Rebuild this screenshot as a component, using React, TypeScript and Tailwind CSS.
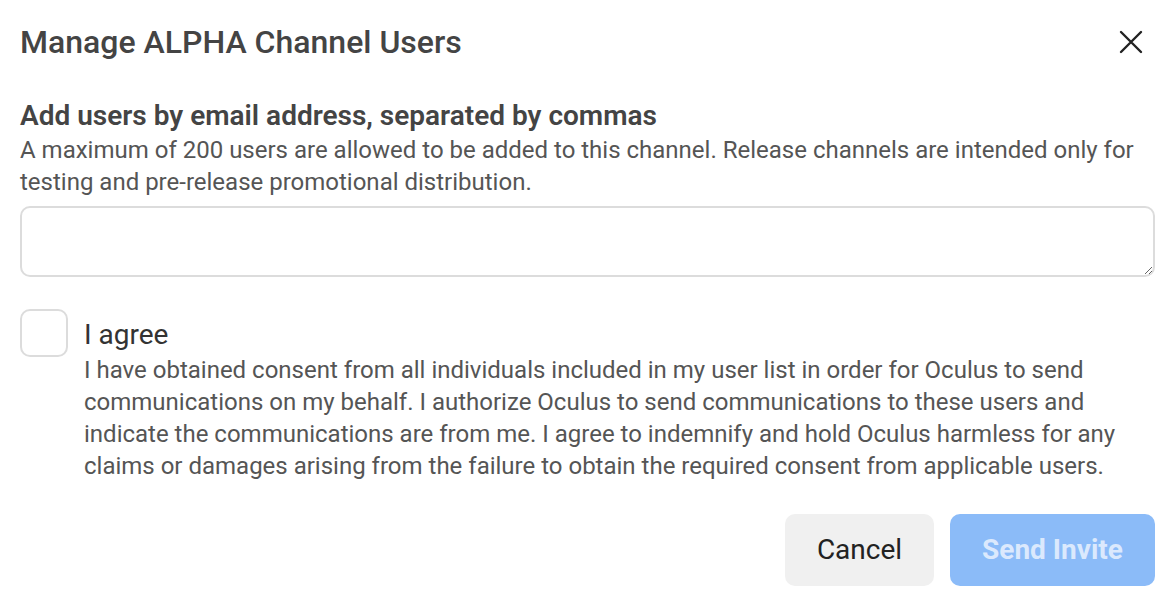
export default function App() {
  return (
    <div
      className="w-[1170px] h-[596px] bg-white pl-5 pr-[15px] pt-[22px] text-[#444]"
      style={{ fontFamily: "Roboto, 'Liberation Sans', sans-serif" }}
    >
      {/* Header */}
      <div className="flex items-center justify-between h-10">
        <h1 className="text-[32px] font-medium text-[#444] leading-10">
          Manage ALPHA Channel Users
        </h1>
        <button className="w-10 h-10 flex items-center justify-center mr-1">
          <svg width="24" height="24" viewBox="0 0 24 24" fill="none" stroke="#222" strokeWidth={2.4} strokeLinecap="round">
            <path d="M2 2l20 20M22 2L2 22" />
          </svg>
        </button>
      </div>

      {/* Email field */}
      <div className="mt-[38px]">
        <h2 className="text-[28px] font-semibold leading-8 text-[#444]">
          Add users by email address, separated by commas
        </h2>
        <p className="mt-[2px] text-[24px] leading-8 text-[#555]">
          A maximum of 200 users are allowed to be added to this channel. Release channels are intended only for
          testing and pre-release promotional distribution.
        </p>
        <textarea
          className="mt-2 block w-full h-[71px] rounded-[10px] border-2 border-[#dcdcdc] outline-none px-3 py-2 text-[22px]"
        />
      </div>

      {/* Agreement */}
      <div className="flex gap-4 mt-8">
        <div className="w-12 h-12 shrink-0 rounded-[10px] border-2 border-[#dcdcdc]" />
        <div className="pt-2">
          <p className="text-[28px] leading-9 text-[#333]">I agree</p>
          <p className="mt-px text-[24px] leading-8 text-[#555]">
            I have obtained consent from all individuals included in my user list in order for Oculus to send
            communications on my behalf. I authorize Oculus to send communications to these users and
            indicate the communications are from me. I agree to indemnify and hold Oculus harmless for any
            claims or damages arising from the failure to obtain the required consent from applicable users.
          </p>
        </div>
      </div>

      {/* Actions */}
      <div className="flex justify-end gap-4 mt-8">
        <button className="w-[149px] h-[72px] rounded-[10px] bg-[#f0f0f0] text-[28px] text-[#222]">
          Cancel
        </button>
        <button className="w-[205px] h-[72px] rounded-[10px] bg-[#8bbbf8] text-[28px] font-bold text-[#dbe9fd]">
          Send Invite
        </button>
      </div>
    </div>
  );
}
